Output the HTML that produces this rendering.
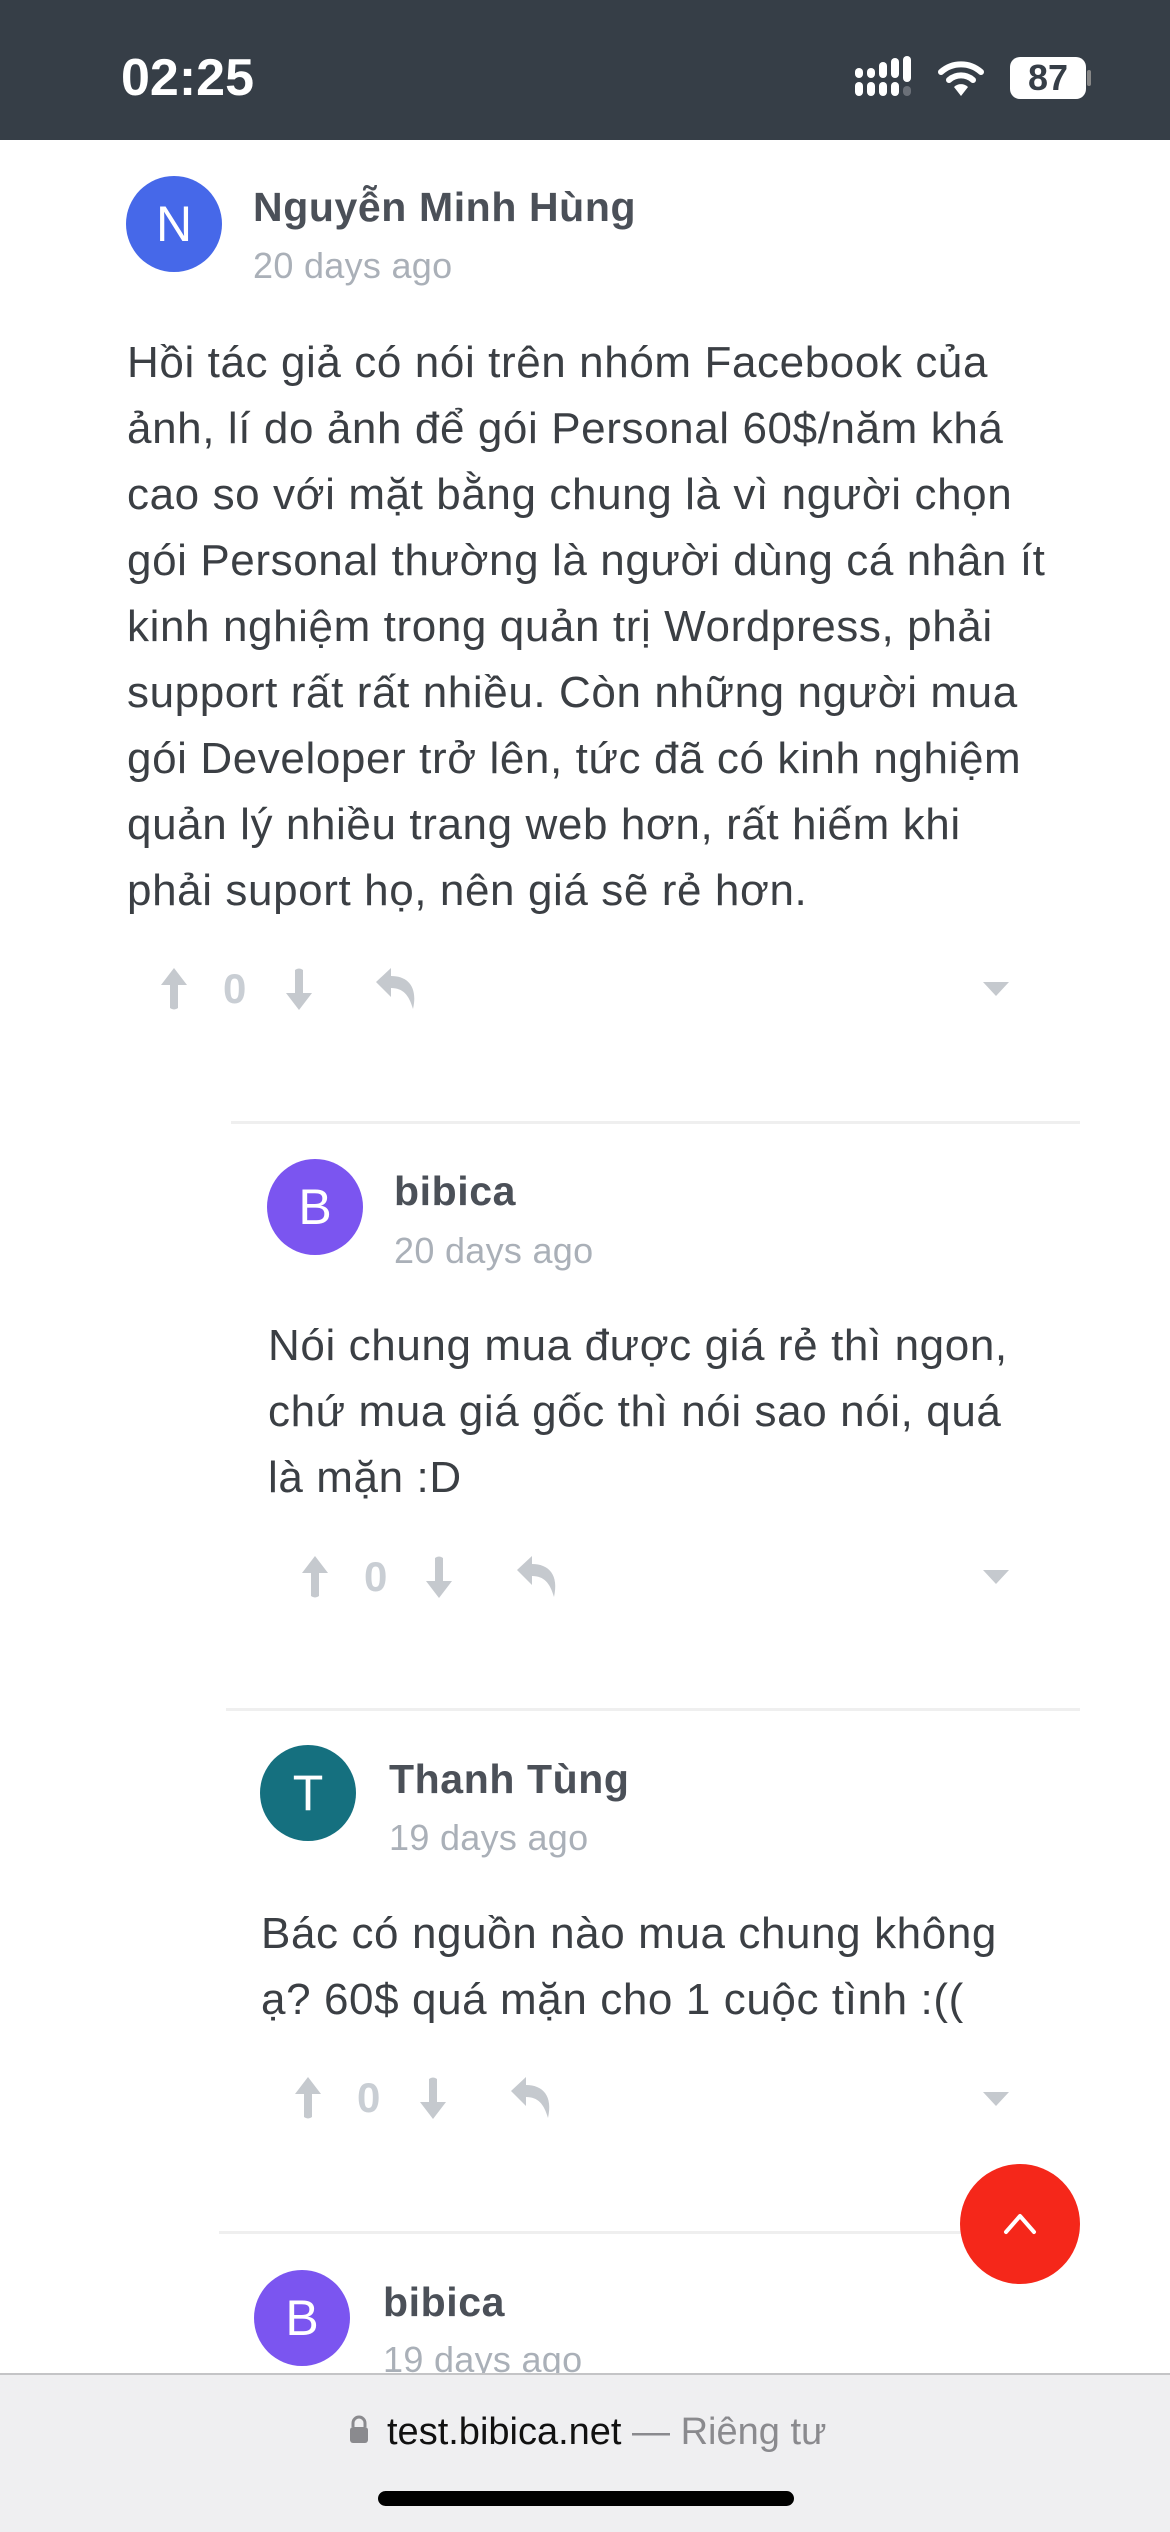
<!DOCTYPE html>
<html><head><meta charset="utf-8"><style>
*{margin:0;padding:0;box-sizing:border-box}
body{width:1170px;height:2532px;background:#fff;position:relative;overflow:hidden;font-family:"Liberation Sans",sans-serif}
.a{position:absolute;white-space:nowrap}
.sb{position:absolute;left:0;top:0;width:1170px;height:140px;background:#363e47}
.av{position:absolute;width:96px;height:96px;border-radius:50%;color:#fff;font-size:50px;text-align:center;line-height:96px}
.nm{font-size:41px;font-weight:bold;color:#4b5058;line-height:50px;letter-spacing:0.6px}
.tm{font-size:36px;color:#aab0b8;line-height:44px;letter-spacing:0.3px}
.tx{font-size:44px;color:#3b3f44;line-height:66px;letter-spacing:0.6px}
.hr{position:absolute;height:3px;background:#efefef}
.ic{position:absolute}
.z{font-size:42px;color:#c9ced4;line-height:44px;font-weight:bold}
</style></head><body>
<div class="sb"></div>
<div class="a" style="left:121px;top:50px;font-size:52px;font-weight:bold;color:#fff;line-height:56px">02:25</div>
<svg class="ic" style="left:855px;top:56px" width="60" height="42">
<g fill="#fff"><rect x="0" y="26" width="8" height="14" rx="4"/><rect x="12" y="26" width="8" height="14" rx="4"/><rect x="24" y="26" width="8" height="14" rx="4"/><rect x="36" y="26" width="8" height="14" rx="4"/><rect x="0" y="12" width="8" height="10" rx="4"/><rect x="12" y="12" width="8" height="10" rx="4"/><rect x="24" y="6" width="8" height="16" rx="4"/><rect x="36" y="2" width="8" height="20" rx="4"/><rect x="48" y="0" width="8" height="26" rx="4"/></g><rect x="48" y="30" width="8" height="10" rx="4" fill="#6b7078"/></svg>
<svg class="ic" style="left:937px;top:58px" width="48" height="40" viewBox="0 0 48 40"><path d="M4 14 A30 30 0 0 1 44 14" stroke="#fff" stroke-width="6" fill="none" stroke-linecap="round"/><path d="M12 22 A18 18 0 0 1 36 22" stroke="#fff" stroke-width="6" fill="none" stroke-linecap="round"/><path d="M24 38 L17 29 A10 10 0 0 1 31 29 Z" fill="#fff"/></svg>
<div class="a" style="left:1010px;top:57px;width:76px;height:42px;background:#fff;border-radius:10px;color:#363e47;font-weight:bold;font-size:36px;line-height:42px;text-align:center">87</div>
<div class="a" style="left:1087px;top:70px;width:4px;height:16px;background:#888;border-radius:2px"></div>

<div class="av" style="left:126px;top:176px;background:#4668e9">N</div>
<div class="a nm" style="left:253px;top:182px">Nguyễn Minh Hùng</div>
<div class="a tm" style="left:253px;top:244px">20 days ago</div>
<div class="a tx" style="left:127px;top:330px">Hồi tác giả có nói trên nhóm Facebook của<br>ảnh, lí do ảnh để gói Personal 60$/năm khá<br>cao so với mặt bằng chung là vì người chọn<br>gói Personal thường là người dùng cá nhân ít<br>kinh nghiệm trong quản trị Wordpress, phải<br>support rất rất nhiều. Còn những người mua<br>gói Developer trở lên, tức đã có kinh nghiệm<br>quản lý nhiều trang web hơn, rất hiếm khi<br>phải suport họ, nên giá sẽ rẻ hơn.</div>

<svg class="ic" style="left:158px;top:967px" width="32" height="44"><path d="M16 1 L29 18 L20 18 L20 41 Q16 44 12 41 L12 18 L3 18Z" fill="#c5c9ce"/></svg>
<div class="a z" style="left:223px;top:967px">0</div>
<svg class="ic" style="left:283px;top:967px" width="32" height="44"><path d="M16 43 L29 26 L20 26 L20 3 Q16 0 12 3 L12 26 L3 26Z" fill="#c5c9ce"/></svg>
<svg class="ic" style="left:374px;top:967px" width="46" height="44"><path d="M2 15 L17 1 L17 9 C34 9 44 20 39 42 C35 28 29 21 17 21 L17 30Z" fill="#c5c9ce"/></svg>
<svg class="ic" style="left:982px;top:980px" width="28" height="18"><path d="M1 2 L27 2 L14 16Z" fill="#c5c9ce"/></svg>

<div class="hr" style="left:231px;top:1121px;width:849px"></div>

<div class="av" style="left:267px;top:1159px;background:#7b55f0">B</div>
<div class="a nm" style="left:394px;top:1166px">bibica</div>
<div class="a tm" style="left:394px;top:1229px">20 days ago</div>
<div class="a tx" style="left:268px;top:1313px">Nói chung mua được giá rẻ thì ngon,<br>chứ mua giá gốc thì nói sao nói, quá<br>là mặn :D</div>

<svg class="ic" style="left:299px;top:1555px" width="32" height="44"><path d="M16 1 L29 18 L20 18 L20 41 Q16 44 12 41 L12 18 L3 18Z" fill="#c5c9ce"/></svg>
<div class="a z" style="left:364px;top:1555px">0</div>
<svg class="ic" style="left:423px;top:1555px" width="32" height="44"><path d="M16 43 L29 26 L20 26 L20 3 Q16 0 12 3 L12 26 L3 26Z" fill="#c5c9ce"/></svg>
<svg class="ic" style="left:515px;top:1555px" width="46" height="44"><path d="M2 15 L17 1 L17 9 C34 9 44 20 39 42 C35 28 29 21 17 21 L17 30Z" fill="#c5c9ce"/></svg>
<svg class="ic" style="left:982px;top:1568px" width="28" height="18"><path d="M1 2 L27 2 L14 16Z" fill="#c5c9ce"/></svg>

<div class="hr" style="left:226px;top:1708px;width:854px"></div>

<div class="av" style="left:260px;top:1745px;background:#15707f">T</div>
<div class="a nm" style="left:389px;top:1754px">Thanh Tùng</div>
<div class="a tm" style="left:389px;top:1816px">19 days ago</div>
<div class="a tx" style="left:261px;top:1901px">Bác có nguồn nào mua chung không<br>ạ? 60$ quá mặn cho 1 cuộc tình :((</div>

<svg class="ic" style="left:292px;top:2076px" width="32" height="44"><path d="M16 1 L29 18 L20 18 L20 41 Q16 44 12 41 L12 18 L3 18Z" fill="#c5c9ce"/></svg>
<div class="a z" style="left:357px;top:2076px">0</div>
<svg class="ic" style="left:417px;top:2076px" width="32" height="44"><path d="M16 43 L29 26 L20 26 L20 3 Q16 0 12 3 L12 26 L3 26Z" fill="#c5c9ce"/></svg>
<svg class="ic" style="left:509px;top:2076px" width="46" height="44"><path d="M2 15 L17 1 L17 9 C34 9 44 20 39 42 C35 28 29 21 17 21 L17 30Z" fill="#c5c9ce"/></svg>
<svg class="ic" style="left:982px;top:2090px" width="28" height="18"><path d="M1 2 L27 2 L14 16Z" fill="#c5c9ce"/></svg>

<div class="hr" style="left:219px;top:2231px;width:861px"></div>

<div class="av" style="left:254px;top:2270px;background:#7b55f0">B</div>
<div class="a nm" style="left:383px;top:2277px">bibica</div>
<div class="a tm" style="left:383px;top:2338px">19 days ago</div>

<div class="a" style="left:960px;top:2164px;width:120px;height:120px;border-radius:50%;background:#f5271a"></div>
<svg class="ic" style="left:1000px;top:2208px" width="40" height="30"><path d="M6 24 L20 8 L34 24" stroke="#fff" stroke-width="4" fill="none" stroke-linecap="round" stroke-linejoin="round"/></svg>

<div class="a" style="left:0;top:2373px;width:1170px;height:159px;background:#efeff1;border-top:2px solid #c4c4c6"></div>
<svg class="ic" style="left:349px;top:2415px" width="20" height="30"><path d="M4 12 V8 A6 6 0 0 1 16 8 V12" stroke="#8a8a8e" stroke-width="3" fill="none"/><rect x="1" y="12" width="18" height="16" rx="3" fill="#8a8a8e"/></svg>
<div class="a" style="left:387px;top:2410px;font-size:38px;line-height:44px;color:#111">test.bibica.net <span style="color:#8a8a8e">— Riêng tư</span></div>
<div class="a" style="left:378px;top:2491px;width:416px;height:15px;border-radius:8px;background:#000"></div>
</body></html>
